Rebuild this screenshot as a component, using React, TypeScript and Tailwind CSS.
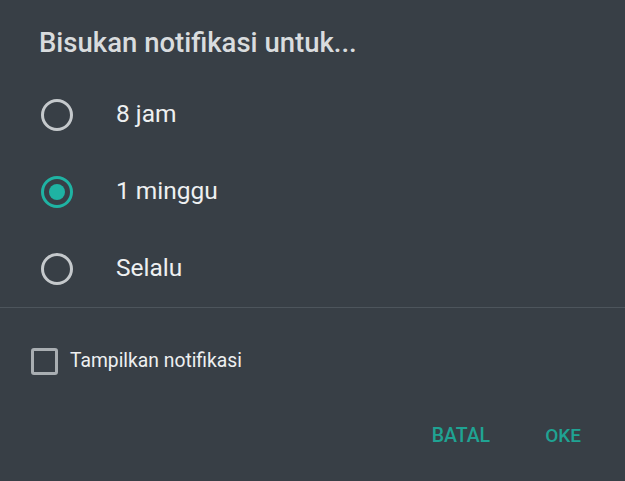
import { useState } from "react";

const options = ["8 jam", "1 minggu", "Selalu"];

export default function App() {
  const [selected, setSelected] = useState<number>(1);
  const [showNotif, setShowNotif] = useState<boolean>(false);

  return (
    <div
      className="w-[625px] h-[481px] bg-[#383f46] flex flex-col overflow-hidden"
      style={{ fontFamily: "Roboto, 'Liberation Sans', sans-serif" }}
    >
      <h2 className="pt-[27px] pl-[39px] text-[27.5px] leading-[32px] font-medium text-[#d9dcde]">
        Bisukan notifikasi untuk...
      </h2>
      <div className="mt-[17px] flex flex-col">
        {options.map((opt, i) => (
          <button
            key={opt}
            onClick={() => setSelected(i)}
            className="h-[77px] flex items-center pl-[41px] text-left"
          >
            {selected === i ? (
              <span className="w-8 h-8 rounded-full border-[3px] border-[#1fb3a3] flex items-center justify-center">
                <span className="w-4 h-4 rounded-full bg-[#1fb3a3]" />
              </span>
            ) : (
              <span className="w-8 h-8 rounded-full border-[3px] border-[#c5c9cc]" />
            )}
            <span className="ml-[43px] text-[24.5px] text-[#eef0f1]">{opt}</span>
          </button>
        ))}
      </div>
      <div className="h-px bg-[#4d555c]" />
      <label
        className="h-[106px] flex items-center pl-[31px] gap-3 cursor-pointer"
        onClick={() => setShowNotif(!showNotif)}
      >
        <span
          className={
            showNotif
              ? "w-[27px] h-[27px] rounded-[3px] border-[3px] border-[#1fb3a3] bg-[#1fb3a3]"
              : "w-[27px] h-[27px] rounded-[3px] border-[3px] border-[#a9aeb2]"
          }
        />
        <span className="text-[19.3px] text-[#eef0f1]">Tampilkan notifikasi</span>
      </label>
      <div className="h-[44px] flex items-center justify-end pr-[44px] gap-[55px]">
        <button className="text-[19.5px] font-medium uppercase text-[#1fa393]">
          Batal
        </button>
        <button className="text-[19px] font-medium uppercase text-[#1fa393]">
          Oke
        </button>
      </div>
    </div>
  );
}
